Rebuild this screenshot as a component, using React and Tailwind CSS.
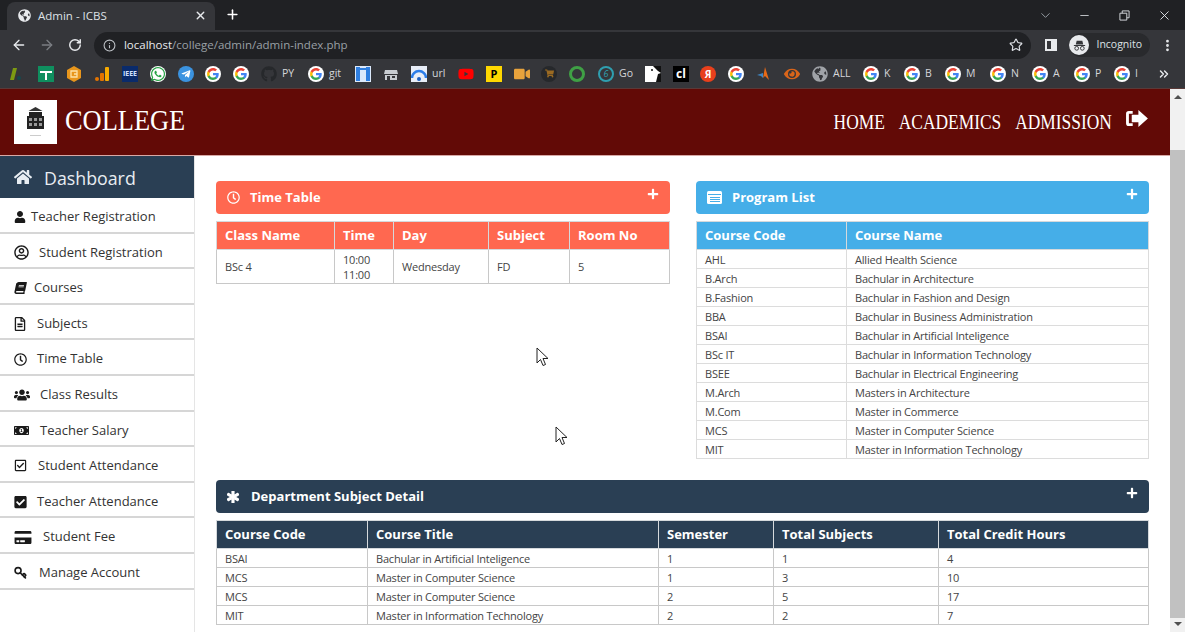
import {
  FaHome, FaUser, FaRegUserCircle, FaBook, FaRegFileAlt, FaRegClock, FaUsers, FaMoneyBillAlt,
  FaRegCheckSquare, FaCheckSquare, FaCreditCard, FaPlus, FaAsterisk,
  FaGlobeAmericas, FaWhatsapp, FaTelegramPlane, FaGithub, FaYoutube, FaVideo, FaShoppingCart, FaEye,
} from 'react-icons/fa';
import { ArrowLeft, ArrowRight, RotateCw, Info, Star, X, Plus, ChevronDown, Minus, MoreVertical, ChevronsRight, Key } from 'lucide-react';

const sidebarItems = [
  { label: 'Teacher Registration', icon: <FaUser className="h-[12px] w-[12px]" />, box: 'w-[17px]' },
  { label: 'Student Registration', icon: <FaRegUserCircle className="h-[15px] w-[15px]" />, box: 'w-[25px]' },
  { label: 'Courses', icon: <FaBook className="h-[12px] w-[13px] -skew-x-12" />, box: 'w-[20px]' },
  { label: 'Subjects', icon: <FaRegFileAlt className="h-[14px] w-[12px]" />, box: 'w-[23px]' },
  { label: 'Time Table', icon: <FaRegClock className="h-[13px] w-[13px]" />, box: 'w-[23px]' },
  { label: 'Class Results', icon: <FaUsers className="h-[16px] w-[16px]" />, box: 'w-[26px]' },
  { label: 'Teacher Salary', icon: <FaMoneyBillAlt className="h-[13px] w-[15px]" />, box: 'w-[26px]' },
  { label: 'Student Attendance', icon: <FaRegCheckSquare className="h-[13px] w-[13px]" />, box: 'w-[24px]' },
  { label: 'Teacher Attendance', icon: <FaCheckSquare className="h-[14px] w-[13px]" />, box: 'w-[23px]' },
  { label: 'Student Fee', icon: <FaCreditCard className="h-[15px] w-[18px]" />, box: 'w-[29px]' },
  { label: 'Manage Account', icon: <Key className="h-[13px] w-[13px] -scale-y-100" strokeWidth={3} />, box: 'w-[25px]' },
];

const programs = [
  ['AHL', 'Allied Health Science'],
  ['B.Arch', 'Bachular in Architecture'],
  ['B.Fashion', 'Bachular in Fashion and Design'],
  ['BBA', 'Bachular in Business Administration'],
  ['BSAI', 'Bachular in Artificial Inteligence'],
  ['BSc IT', 'Bachular in Information Technology'],
  ['BSEE', 'Bachular in Electrical Engineering'],
  ['M.Arch', 'Masters in Architecture'],
  ['M.Com', 'Master in Commerce'],
  ['MCS', 'Master in Computer Science'],
  ['MIT', 'Master in Information Technology'],
];

const departments = [
  ['BSAI', 'Bachular in Artificial Inteligence', '1', '1', '4'],
  ['MCS', 'Master in Computer Science', '1', '3', '10'],
  ['MCS', 'Master in Computer Science', '2', '5', '17'],
  ['MIT', 'Master in Information Technology', '2', '2', '7'],
];

function GoogleG() {
  return (
    <svg viewBox="0 0 24 24" className="h-[16px] w-[16px] shrink-0">
      <circle cx="12" cy="12" r="12" fill="#fff" />
      <path fill="#4285F4" d="M20.6 12.2c0-.6-.1-1.2-.2-1.8H12v3.4h4.8c-.2 1.100-.8 2-1.800 2.700v2.200h2.900c1.700-1.600 2.700-3.900 2.700-6.500z" />
      <path fill="#34A853" d="M12 21c2.400 0 4.500-.8 5.900-2.200L15 16.500c-.8.500-1.800.9-3 .9-2.300 0-4.300-1.600-5-3.700H4v2.300C5.500 19 8.500 21 12 21z" />
      <path fill="#FBBC05" d="M7 13.700c-.4-1.100-.4-2.300 0-3.400V8H4c-1.200 2.500-1.200 5.500 0 8z" />
      <path fill="#EA4335" d="M12 6.600c1.300 0 2.500.5 3.400 1.300l2.600-2.600C16.400 3.900 14.300 3 12 3 8.500 3 5.500 5 4 8l3 2.300c.7-2.100 2.700-3.700 5-3.700z" />
    </svg>
  );
}

const bookmarks = [
  { w: 'w-[31px]', icon: <svg viewBox="0 0 16 16" className="h-4 w-4"><path fill="#7d9a12" d="M3 14 6 2h4L7 14z" /><circle cx="12" cy="12" r="2" fill="#17494d" /></svg> },
  { w: 'w-7', icon: <svg viewBox="0 0 16 16" className="h-4 w-4"><rect width="16" height="16" fill="#0f8f5f" /><path fill="#fff" d="M2 5h12v2H9v7H7V7H2z" /></svg> },
  { w: 'w-7', icon: <svg viewBox="0 0 16 16" className="h-4 w-4"><path fill="#e8961c" d="M8 0l7 4v8l-7 4-7-4V4z" /><path fill="none" stroke="#fde2a8" strokeWidth="1.300" d="M5 5h6v6H5zM8 8h3" /></svg> },
  { w: 'w-7', icon: <svg viewBox="0 0 16 16" className="h-4 w-4"><circle cx="3" cy="13" r="2" fill="#e37400" /><rect x="6" y="7" width="4" height="8" rx="1" fill="#e37400" /><rect x="11" y="1" width="4" height="14" rx="1" fill="#f9ab00" /></svg> },
  { w: 'w-7', icon: <span className="flex h-4 w-4 items-center justify-center bg-[#0a2b6b] text-[7px] font-bold leading-none text-[#cfe0ff]">IEEE</span> },
  { w: 'w-7', icon: <span className="flex h-4 w-4 items-center justify-center rounded-full bg-white text-[#25a244]"><FaWhatsapp className="h-4 w-4" /></span> },
  { w: 'w-[27px]', icon: <span className="flex h-4 w-4 items-center justify-center rounded-full bg-[#3b93e0] text-white"><FaTelegramPlane className="h-[10px] w-[10px]" /></span> },
  { w: 'w-7', icon: <GoogleG /> },
  { w: 'w-7', icon: <GoogleG /> },
  { w: 'w-[47px]', icon: <FaGithub className="h-4 w-4 text-[#26282b]" />, label: 'PY' },
  { w: 'w-[47px]', icon: <GoogleG />, label: 'git' },
  { w: 'w-7', icon: <svg viewBox="0 0 16 16" className="h-4 w-4"><rect width="16" height="16" fill="#dbe9fb" /><path fill="#2f7fe0" d="M1 1h4v14H1zM11 1h4v14h-4zM5 2h6v2H5z" /></svg> },
  { w: 'w-7', icon: <svg viewBox="0 0 16 16" className="h-4 w-4"><path fill="#c8ccd1" d="M2 4h12l1 4H1zM2 9h12v5H2z" /><path fill="#35363a" d="M4 10h3v4H4zM9 10h3v2H9z" /></svg> },
  { w: 'w-[47px]', icon: <svg viewBox="0 0 16 16" className="h-4 w-4"><rect width="16" height="16" fill="#e8eef8" /><path fill="none" stroke="#2b7de9" strokeWidth="2.500" d="M1 12a7 7 0 0 1 14 0" /><circle cx="8" cy="13" r="2" fill="#1a5fc4" /></svg>, label: 'url' },
  { w: 'w-7', icon: <FaYoutube className="h-4 w-4 text-[#f00]" /> },
  { w: 'w-7', icon: <span className="flex h-4 w-4 items-center justify-center bg-[#ffd800] text-[11px] font-bold leading-none text-black">P</span> },
  { w: 'w-[27px]', icon: <FaVideo className="h-4 w-4 text-[#e8a33c]" /> },
  { w: 'w-7', icon: <span className="flex h-4 w-4 items-center justify-center rounded-full bg-[#26282b] text-[#9a6a22]"><FaShoppingCart className="h-[9px] w-[9px]" /></span> },
  { w: 'w-[29px]', icon: <span className="h-4 w-4 rounded-full border-[3px] border-[#3fa045]" /> },
  { w: 'w-[47px]', icon: <span className="flex h-4 w-4 items-center justify-center rounded-full border-2 border-[#2f9fb0] text-[9px] italic leading-none text-[#2f9fb0]">6</span>, label: 'Go' },
  { w: 'w-7', icon: <svg viewBox="0 0 16 16" className="h-4 w-4"><rect width="16" height="16" fill="#111" /><path fill="#fff" d="M0 0h8l5 5 3 2-3 1-2 8H0z" /><circle cx="7" cy="4" r="1" fill="#111" /></svg> },
  { w: 'w-[27px]', icon: <span className="flex h-4 w-4 items-center justify-center bg-black text-[12px] font-bold leading-none text-white">cl</span> },
  { w: 'w-7', icon: <span className="flex h-4 w-4 items-center justify-center rounded-full bg-[#e8401c] text-[10px] font-bold leading-none text-white">Я</span> },
  { w: 'w-7', icon: <GoogleG /> },
  { w: 'w-7', icon: <svg viewBox="0 0 16 16" className="h-4 w-4"><path fill="#e86a17" d="M9 1l4 13-4-4-2 2z" /><path fill="#3f87c5" d="M1 9l6-2 0 5-2-2z" /></svg> },
  { w: 'w-7', icon: <FaEye className="h-4 w-4 text-[#d9651a]" /> },
  { w: 'w-[51px]', icon: <FaGlobeAmericas className="h-4 w-4 text-[#a0a3a8]" />, label: 'ALL' },
  { w: 'w-[41px]', icon: <GoogleG />, label: 'K' },
  { w: 'w-[41px]', icon: <GoogleG />, label: 'B' },
  { w: 'w-[45px]', icon: <GoogleG />, label: 'M' },
  { w: 'w-[42px]', icon: <GoogleG />, label: 'N' },
  { w: 'w-[42px]', icon: <GoogleG />, label: 'A' },
  { w: 'w-10', icon: <GoogleG />, label: 'P' },
  { w: 'w-[42px]', icon: <GoogleG />, label: 'I' },
];

function BrowserChrome() {
  return (
    <div className="shrink-0 font-['Open_Sans',sans-serif] text-[#dee1e6]">
      <div className="flex h-[30px] items-end bg-[#202124] pl-[7px]">
        <div className="flex h-[28px] w-[208px] items-center rounded-t-lg bg-[#35363a] pb-[1px] pl-[11px] pr-[8px]">
          <FaGlobeAmericas className="h-[13px] w-[13px] text-[#e8eaed]" />
          <span className="ml-[7px] flex-1 text-[11.5px]">Admin - ICBS</span>
          <X className="h-[13px] w-[13px] text-[#e8eaed]" strokeWidth={2.5} />
        </div>
        <div className="mb-[8px] ml-[10px] flex-1">
          <Plus className="h-[15px] w-[15px] text-white" strokeWidth={2.5} />
        </div>
        <div className="mb-[7px] flex items-center pr-[13px]">
          <ChevronDown className="mr-[25px] h-[15px] w-[15px] text-[#9aa0a6]" strokeWidth={1.5} />
          <Minus className="mr-[28px] h-[13px] w-[13px]" strokeWidth={1.500} />
          <svg viewBox="0 0 12 12" className="mr-[27px] h-[11px] w-[11px]" fill="none" stroke="#dee1e6"><path d="M1 3.500h7.500V11H1zM3.500 3.500V1H11v7.500H8.500" /></svg>
          <X className="h-[15px] w-[15px]" strokeWidth={1.500} />
        </div>
      </div>
      <div className="flex h-[30px] items-center bg-[#35363a] pl-[11px] pr-[10px]">
        <ArrowLeft className="h-[16px] w-[16px] text-[#e8eaed]" />
        <ArrowRight className="ml-[12px] h-[16px] w-[16px] text-[#7b7e83]" />
        <RotateCw className="ml-[13px] h-[14px] w-[14px] text-[#e8eaed]" strokeWidth={2.500} />
        <div className="ml-[12px] flex h-[27px] w-[939px] items-center rounded-full bg-[#202124] pl-[9px] pr-[8px] text-[11.5px]">
          <Info className="h-[13px] w-[13px] text-[#bdc1c6]" />
          <span className="ml-[8px] flex-1">
            <span className="text-[#e8eaed]">localhost</span>
            <span className="text-[#9aa0a6]">/college/admin/admin-index.php</span>
          </span>
          <Star className="h-[14px] w-[14px] text-[#dee1e6]" />
        </div>
        <span className="ml-[14px] h-[12px] w-[12px] border-2 border-r-[6px] border-[#e8eaed]" />
        <div className="ml-[12px] flex h-[24px] items-center rounded-full bg-[#292a2d] pr-[8px]">
          <span className="flex h-[20px] w-[20px] items-center justify-center rounded-full bg-[#e8eaed]">
            <svg viewBox="0 0 16 16" className="h-[15px] w-[15px]" fill="#35363a"><path d="M5 3h6l1 4H4zM2 7.500h12v1H2z" /><circle cx="5" cy="11" r="2" fill="none" stroke="#35363a" /><circle cx="11" cy="11" r="2" fill="none" stroke="#35363a" /></svg>
          </span>
          <span className="ml-[7px] text-[10.500px]">Incognito</span>
        </div>
        <MoreVertical className="ml-[10px] h-[15px] w-[15px] text-[#e8eaed]" strokeWidth={2.500} />
      </div>
      <div className="flex h-[29px] items-center border-b border-[#5a3a38] bg-[#35363a] pb-[1px] pl-[7px]">
        {bookmarks.map((item, i) => (
          <div key={i} className={`flex shrink-0 items-center ${item.w}`}>
            {item.icon}
            {item.label && <span className="ml-[5px] text-[10.500px] text-[#d5d7da]">{item.label}</span>}
          </div>
        ))}
        <ChevronsRight className="ml-[1px] h-[14px] w-[14px] text-[#e8eaed]" strokeWidth={2.500} />
      </div>
    </div>
  );
}

function PanelHeading({ icon, title, color, gap }) {
  return (
    <div className={`flex h-[33px] items-center rounded-[4px] pl-[11px] pr-[11px] text-white ${color}`}>
      <span className={`flex shrink-0 items-center ${gap}`}>{icon}</span>
      <span className="flex-1 text-[13px] font-bold">{title}</span>
      <FaPlus className="-mt-[8px] h-[12px] w-[12px]" />
    </div>
  );
}

const headCell = 'border border-[#d5d9dc] px-[8px] text-left text-[13px] font-bold text-white';
const bodyCell = 'border border-[#c8c8c8] px-[8px] text-[11px] font-normal leading-[15px] tracking-[-0.2px] text-[#444]';

function Sidebar() {
  return (
    <aside className="w-[195px] shrink-0 self-stretch border-r border-[#e5e5e5] bg-white">
      <div className="flex h-[42px] items-center bg-[#2a3f54] pl-[14px] text-white">
        <FaHome className="h-[18px] w-[18px] text-[#e8edf2]" />
        <span className="ml-[12px] pt-[2px] text-[17.800px] text-[#e8edf2]">Dashboard</span>
      </div>
      {sidebarItems.map((item) => (
        <div key={item.label} className="flex h-[35.600px] items-center border-b-2 border-[#d6d6d6] pl-[14px] pt-[4px] text-[13px] text-[#333]">
          <span className={`flex shrink-0 items-center text-[#1a1a1a] ${item.box}`}>{item.icon}</span>
          <span>{item.label}</span>
        </div>
      ))}
    </aside>
  );
}

function Cursor({ className }) {
  return (
    <svg viewBox="0 0 14 20" className={`absolute h-[20px] w-[14px] ${className}`} fill="#fff" stroke="#222" strokeWidth="1">
      <path d="M1 1v15l3.500-3.500 2.500 6 2.500-1-2.500-6H12z" />
    </svg>
  );
}

export default function App() {
  return (
    <div className="relative flex h-[632px] w-[1185px] flex-col overflow-hidden bg-white font-['Open_Sans',sans-serif]">
      <BrowserChrome />
      <div className="flex min-h-0 flex-1">
        <div className="flex min-w-0 flex-1 flex-col">
          <header className="flex h-[67px] shrink-0 items-center border-b border-[#d8a9a6] bg-[#620a06] pl-[14px] pr-[22px] text-white">
            <div className="flex h-[44px] w-[43px] items-center justify-center bg-white">
              <svg viewBox="0 0 43 44" className="h-[44px] w-[43px]">
                <path fill="#333" d="M21.500 7l7 4h-14z" />
                <path fill="#222" d="M15 12h13v4h2v13H13V16h2z" />
                <path fill="#999" d="M15 18h3v3h-3zM20 18h3v3h-3zM25 18h3v3h-3zM15 23h3v3h-3zM20 23h3v3h-3zM25 23h3v3h-3z" />
                <rect x="16" y="35" width="11" height="1" fill="#ccc" />
              </svg>
            </div>
            <span className="-mt-[5px] ml-[8px] flex-1 origin-left scale-x-[0.88] font-['Liberation_Serif',serif] text-[30px] leading-none">COLLEGE</span>
            <nav className="flex origin-right scale-x-[0.87] items-center gap-[16px] font-['Liberation_Serif',serif] text-[20px]">
              <span>HOME</span>
              <span>ACADEMICS</span>
              <span>ADMISSION</span>
            </nav>
            <svg viewBox="0 0 24 20" className="-mt-[8px] ml-[13px] h-[19px] w-[23px]" fill="#fff">
              <path d="M8 2H4a3 3 0 0 0-3 3v10a3 3 0 0 0 3 3h4v-3H4V5h4z" />
              <path d="M14 1l10 9-10 9v-5H7V6h7z" />
            </svg>
          </header>
          <div className="flex min-h-0 flex-1">
            <Sidebar />
            <main className="min-w-0 flex-1 px-[21px] pt-[25px]">
              <div className="flex h-[278px] gap-[26px]">
                <section className="w-[454px]">
                  <PanelHeading title="Time Table" color="bg-[#ff6850]" gap="w-[23px]" icon={<FaRegClock className="h-[13px] w-[13px]" />} />
                  <table className="mt-[7px] w-full table-fixed border-collapse">
                    <thead>
                      <tr className="h-[28px] bg-[#ff6850]">
                        <th className={`${headCell} w-[118px]`}>Class Name</th>
                        <th className={`${headCell} w-[59px]`}>Time</th>
                        <th className={`${headCell} w-[95px]`}>Day</th>
                        <th className={`${headCell} w-[81px]`}>Subject</th>
                        <th className={headCell}>Room No</th>
                      </tr>
                    </thead>
                    <tbody>
                      <tr className="h-[34px]">
                        <td className={bodyCell}>BSc 4</td>
                        <td className={bodyCell}>10:00<br />11:00</td>
                        <td className={bodyCell}>Wednesday</td>
                        <td className={bodyCell}>FD</td>
                        <td className={bodyCell}>5</td>
                      </tr>
                    </tbody>
                  </table>
                </section>
                <section className="flex-1">
                  <PanelHeading
                    title="Program List"
                    color="bg-[#45aee8]"
                    gap="w-[25px]"
                    icon={
                      <svg viewBox="0 0 15 13" className="h-[13px] w-[15px]">
                        <rect width="15" height="13" rx="1.500" fill="#fff" />
                        <path fill="#45aee8" d="M1 3h13v1H1zM3 6h10v1H3zM3 8h10v1H3zM3 10h10v1H3z" />
                      </svg>
                    }
                  />
                  <table className="mt-[7px] w-full table-fixed border-collapse">
                    <thead>
                      <tr className="h-[28px] bg-[#45aee8]">
                        <th className={`${headCell} w-[150px]`}>Course Code</th>
                        <th className={headCell}>Course Name</th>
                      </tr>
                    </thead>
                    <tbody>
                      {programs.map(([code, name]) => (
                        <tr key={code} className="h-[19px]">
                          <td className={`${bodyCell} border-[#dcdcdc]`}>{code}</td>
                          <td className={`${bodyCell} border-[#dcdcdc]`}>{name}</td>
                        </tr>
                      ))}
                    </tbody>
                  </table>
                </section>
              </div>
              <section className="mt-[21px]">
                <PanelHeading
                  title="Department Subject Detail"
                  color="bg-[#2a3f54]"
                  gap="w-[24px]"
                  icon={<FaAsterisk className="h-[12px] w-[12px]" stroke="currentColor" strokeWidth={50} />}
                />
                <table className="mt-[7px] w-full table-fixed border-collapse">
                  <thead>
                    <tr className="h-[28px] bg-[#2a3f54]">
                      <th className={`${headCell} w-[151px]`}>Course Code</th>
                      <th className={`${headCell} w-[291px]`}>Course Title</th>
                      <th className={`${headCell} w-[115px]`}>Semester</th>
                      <th className={`${headCell} w-[165px]`}>Total Subjects</th>
                      <th className={headCell}>Total Credit Hours</th>
                    </tr>
                  </thead>
                  <tbody>
                    {departments.map((row, i) => (
                      <tr key={i} className="h-[19px]">
                        {row.map((cell, j) => (
                          <td key={j} className={bodyCell}>{cell}</td>
                        ))}
                      </tr>
                    ))}
                  </tbody>
                </table>
              </section>
            </main>
          </div>
        </div>
        <div className="flex w-[15px] shrink-0 flex-col items-center bg-[#f1f1f1]">
          <span className="mt-[6px] h-0 w-0 border-x-[4px] border-b-[4px] border-x-transparent border-b-[#505050]" />
          <span className="mt-[51px] h-[468px] w-full bg-[#c1c1c1]" />
          <span className="mt-[4px] h-0 w-0 border-x-[4px] border-t-[4px] border-x-transparent border-t-[#505050]" />
        </div>
      </div>
      <Cursor className="left-[536px] top-[347px]" />
      <Cursor className="left-[555px] top-[426px]" />
    </div>
  );
}
